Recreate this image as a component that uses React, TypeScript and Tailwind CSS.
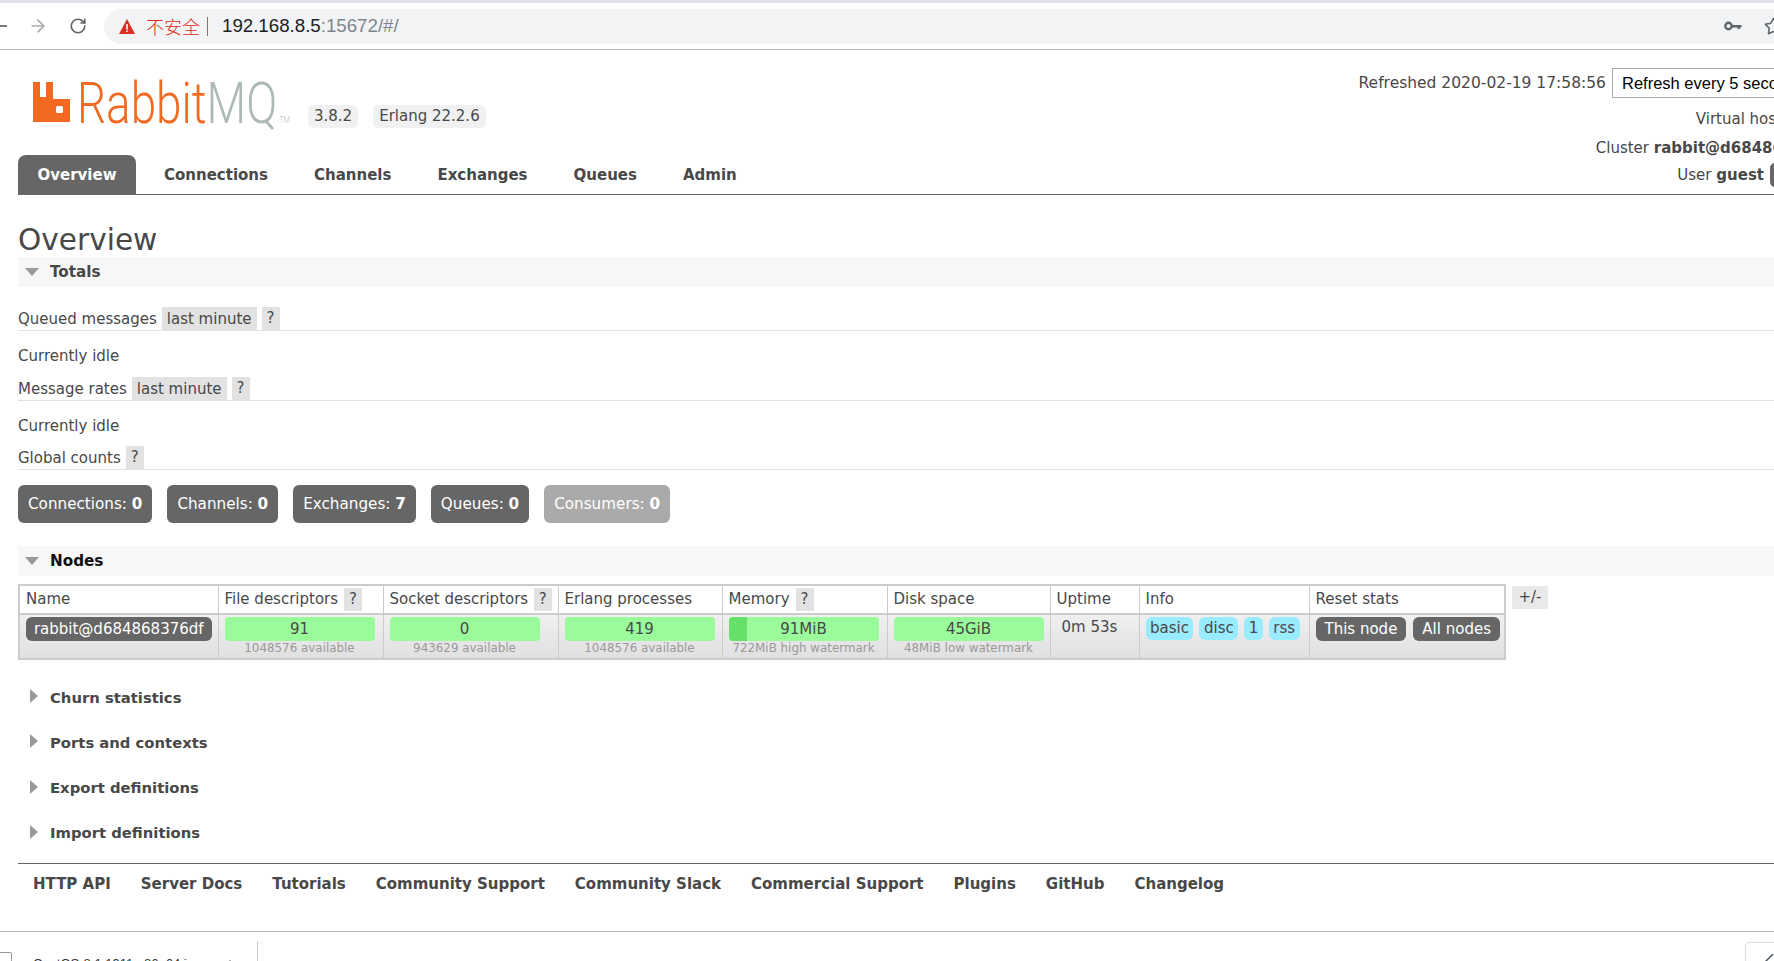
import type { ReactNode } from "react";
import { ArrowRight, RotateCw, Star, ChevronUp } from "lucide-react";

const font = { fontFamily: '"DejaVu Sans", Verdana, sans-serif' };

function Help() {
  return <span className="inline-flex items-center justify-center bg-[#e2e2e2] text-[#484848] h-[23px] w-[18px]">?</span>;
}

function Down() {
  return <span className="w-0 h-0 border-l-[7px] border-r-[7px] border-t-[8px] border-l-transparent border-r-transparent border-t-[#999]" />;
}

function Right() {
  return <span className="w-0 h-0 border-t-[7px] border-b-[7px] border-l-[8px] border-t-transparent border-b-transparent border-l-[#999] -mt-[3px]" />;
}

function Section({ title, dark }: { title: string; dark?: boolean }) {
  return (
    <div className="h-[30px] bg-[#f7f7f7] flex items-center pl-[7px] gap-[11px]">
      <Down />
      <span className={"font-bold text-[15.2px] " + (dark ? "text-[#111]" : "text-[#484848]")}>{title}</span>
    </div>
  );
}

function Closed({ title }: { title: string }) {
  return (
    <div className="h-[45.3px] flex items-center pl-[12px] gap-[12px]">
      <Right />
      <span className="font-bold text-[14.8px] text-[#484848]">{title}</span>
    </div>
  );
}

function Sub({ label, badge }: { label: string; badge?: boolean }) {
  return (
    <div className="h-[23px] flex items-end border-b border-[#e2e2e2] box-content">
      <span className="self-center text-[#484848] mr-[5px] pt-[2px]">{label}</span>
      {badge && <span className="h-[23px] bg-[#e2e2e2] px-[5px] pt-[2px] flex items-center mr-[5px] text-[#484848]">last minute</span>}
      <Help />
    </div>
  );
}

function Count({ label, n, off }: { label: string; n: number; off?: boolean }) {
  return (
    <span className={"h-[38px] rounded-[6px] px-[10px] flex items-center text-white text-[15.2px] " + (off ? "bg-[#aaa]" : "bg-[#666]")}>
      {label}:&nbsp;<b>{n}</b>
    </span>
  );
}

function Bar({ value, sub, mark }: { value: string; sub: string; mark?: boolean }) {
  return (
    <td className="border-r border-[#ccc] align-top pl-[6px] pt-[2px] text-center">
      <div className="w-[150px]">
        <div className="relative h-[24px] rounded-[4px] bg-[#99fb99] flex items-center justify-center overflow-hidden text-[#484848]">
          {mark && <span className="absolute left-0 top-0 bottom-0 w-[18px] bg-[#66e066]" />}
          <span className="relative">{value}</span>
        </div>
        <div className="text-[11.9px] leading-[14px] text-[#999] whitespace-nowrap">{sub}</div>
      </div>
    </td>
  );
}

function Th({ w, children }: { w: number; children: ReactNode }) {
  return (
    <th style={{ width: w }} className="border-r border-b-2 border-[#ccc] text-left font-normal text-[#484848] px-[6px] h-[29px]">
      <span className="flex items-center gap-[6px] whitespace-nowrap">{children}</span>
    </th>
  );
}

function Chip({ children }: { children: ReactNode }) {
  return <span className="h-[23px] px-[4.5px] rounded-[6px] bg-[#99ebff] text-[#484848] flex items-center">{children}</span>;
}

function Pill({ children }: { children: ReactNode }) {
  return <span className="h-[24px] px-[9px] rounded-[6px] bg-[#666] text-white flex items-center whitespace-nowrap">{children}</span>;
}

export default function App() {
  const tabs = ["Connections", "Channels", "Exchanges", "Queues", "Admin"];
  const links = ["HTTP API", "Server Docs", "Tutorials", "Community Support", "Community Slack", "Commercial Support", "Plugins", "GitHub", "Changelog"];
  return (
    <div style={font} className="w-[1774px] h-[961px] overflow-hidden bg-white text-[15px] flex flex-col">
      <div className="h-[3px] bg-[#dee1e6] shrink-0" />
      <div className="h-[46px] shrink-0 border-b border-[#b4b4b4] box-content flex items-center bg-white">
        <span className="w-[7px] h-[2px] bg-[#777] mr-[21px]" />
        <ArrowRight size={20} className="text-[#aaa] mr-[21px]" strokeWidth={2} />
        <RotateCw size={18} className="text-[#5f6368] mr-[17px]" strokeWidth={2.2} />
        <div className="flex-1 h-[35px] rounded-l-[18px] bg-[#f1f3f4] flex items-center pl-[15px]">
          <svg width="16" height="15" viewBox="0 0 16 15"><path d="M8 0 L16 15 H0Z" fill="#d93025" /><rect x="7.2" y="5" width="1.6" height="5.5" fill="#fff" /><rect x="7.2" y="11.5" width="1.6" height="1.6" fill="#fff" /></svg>
          <span style={{ fontFamily: '"Noto Sans CJK SC", sans-serif' }} className="text-[#e02a20] text-[18px] ml-[11px] font-light">不安全</span>
          <span className="w-px h-[19px] bg-[#777] ml-[7px] mr-[14px]" />
          <span style={{ fontFamily: '"Liberation Sans", sans-serif' }} className="text-[18.7px] text-[#202124]">192.168.8.5<span className="text-[#80868b]">:15672/#/</span></span>
          <div className="ml-auto flex items-center">
            <svg width="18" height="10" viewBox="0 0 18 10" className="mr-[22px]"><circle cx="4.5" cy="5" r="3.2" fill="none" stroke="#5f6368" strokeWidth="2.4" /><path d="M8 4 H17.5 V6.5 H16 V8 H13.5 V6.5 H8Z" fill="#5f6368" /></svg>
            <Star size={19} className="text-[#5f6368] -mr-[9px]" />
          </div>
        </div>
      </div>

      <div className="h-[145px] shrink-0 flex justify-between border-b border-[#666] ml-[18px] -mr-[70px]">
        <div className="flex flex-col justify-between">
          <div className="flex items-end pt-[32px] pl-[15px]">
            <svg width="37" height="40" viewBox="0 0 37 40" className="shrink-0 mb-[1px]">
              <path d="M0 0 H7 V15 H13 V0 H20 V17 H37 V40 H0Z" fill="#f26a21" />
              <rect x="23" y="24" width="7" height="7" rx="1.5" fill="#fff" />
            </svg>
            <div style={{ fontFamily: "Roboto, sans-serif" }} className="w-[210px] h-[41px] leading-[41px] text-[58px] font-light whitespace-nowrap origin-left scale-x-[0.79] ml-[7px] -mb-[1px]">
              <span className="text-[#f26a21]">Rabbit</span><span className="text-[#adbab4]">MQ</span><span className="text-[9px] text-[#bbb] ml-[3px]">TM</span>
            </div>
            <span className="h-[23px] px-[6px] ml-[21px] rounded-[5px] bg-[#f1f1f1] text-[#484848] flex items-center -mb-[5px]">3.8.2</span>
            <span className="h-[23px] px-[6px] ml-[15px] rounded-[5px] bg-[#f1f1f1] text-[#484848] flex items-center -mb-[5px] whitespace-nowrap">Erlang 22.2.6</span>
          </div>
          <div className="flex h-[39px] items-stretch font-bold text-[#484848]">
            <span className="w-[118px] rounded-t-[8px] bg-[#666] text-[#fff] flex items-center justify-center pt-[2px]">Overview</span>
            {tabs.map((t, i) => (
              <span key={t} className={"flex items-center pt-[2px] " + (i === 0 ? "ml-[28px]" : "ml-[46px]")}>{t}</span>
            ))}
          </div>
        </div>
        <div className="text-[#484848] flex flex-col items-end pt-[16px] w-[500px]">
          <div className="flex items-center h-[34px]">
            <span className="mr-[6px] pt-[2px] text-[15.5px]">Refreshed 2020-02-19 17:58:56</span>
            <span style={{ fontFamily: '"Liberation Sans", sans-serif' }} className="h-[30px] w-[232px] border border-[#aaa] bg-white text-black text-[16.5px] flex items-center px-[9px] whitespace-nowrap overflow-hidden">Refresh every 5 seconds</span>
          </div>
          <div className="h-[24px] mt-[7px] mr-[2px] flex items-center">Virtual host<span className="w-[60px]" /></div>
          <div className="h-[24px] mt-[5px] mr-[2px] flex items-center">Cluster&nbsp;<b>rabbit@d684868376df</b></div>
          <div className="h-[24px] mt-[3px] mr-[2px] flex items-center">User&nbsp;<b>guest</b><span className="h-[24px] w-[72px] rounded-[5px] bg-[#666] text-white ml-[6px] flex items-center justify-center">Log out</span></div>
        </div>
      </div>

      <main className="flex-1 pl-[18px] -mr-[70px]">
        <h1 className="text-[29.6px] leading-[32px] mt-[29px] text-[#484848] h-[32px]">Overview</h1>
        <div className="mt-[1px]"><Section title="Totals" /></div>
        <div className="mt-[20px]"><Sub label="Queued messages" badge /></div>
        <div className="mt-[13px] h-[24px] flex items-center text-[#484848]">Currently idle</div>
        <div className="mt-[9px]"><Sub label="Message rates" badge /></div>
        <div className="mt-[13px] h-[24px] flex items-center text-[#484848]">Currently idle</div>
        <div className="mt-[8px]"><Sub label="Global counts" /></div>
        <div className="mt-[15px] flex gap-[15px]">
          <Count label="Connections" n={0} />
          <Count label="Channels" n={0} />
          <Count label="Exchanges" n={7} />
          <Count label="Queues" n={0} />
          <Count label="Consumers" n={0} off />
        </div>
        <div className="mt-[23px]"><Section title="Nodes" dark /></div>
        <div className="mt-[8px] flex items-start gap-[6px]">
          <table className="border-collapse border-2 border-[#ccc] table-fixed w-[1488px]">
            <thead>
              <tr>
                <Th w={199}>Name</Th>
                <Th w={165}>File descriptors <Help /></Th>
                <Th w={175}>Socket descriptors <Help /></Th>
                <Th w={164}>Erlang processes</Th>
                <Th w={165}>Memory <Help /></Th>
                <Th w={163}>Disk space</Th>
                <Th w={89}>Uptime</Th>
                <Th w={170}>Info</Th>
                <Th w={196}>Reset stats</Th>
              </tr>
            </thead>
            <tbody>
              <tr className="h-[45px] bg-gradient-to-b from-[#f0f0f0] to-[#e0e0e0]">
                <td className="border-r border-[#ccc] align-top px-[6px] pt-[2px]">
                  <span className="h-[24px] rounded-[6px] bg-[#666] text-white flex items-center justify-center whitespace-nowrap">rabbit@d684868376df</span>
                </td>
                <Bar value="91" sub="1048576 available" />
                <Bar value="0" sub="943629 available" />
                <Bar value="419" sub="1048576 available" />
                <Bar value="91MiB" sub="722MiB high watermark" mark />
                <Bar value="45GiB" sub="48MiB low watermark" />
                <td className="border-r border-[#ccc] align-top pl-[11px] pt-[1px] text-[#484848] whitespace-nowrap">0m 53s</td>
                <td className="border-r border-[#ccc] align-top px-[6px] pt-[2px]">
                  <div className="flex gap-[6px]"><Chip>basic</Chip><Chip>disc</Chip><Chip>1</Chip><Chip>rss</Chip></div>
                </td>
                <td className="align-top px-[6px] pt-[2px]">
                  <div className="flex gap-[7px]"><Pill>This node</Pill><Pill>All nodes</Pill></div>
                </td>
              </tr>
            </tbody>
          </table>
          <span className="h-[23px] w-[36px] mt-[2px] bg-[#e9e9e9] text-[#484848] flex items-center justify-center">+/-</span>
        </div>
        <div className="mt-[15px]">
          <Closed title="Churn statistics" />
          <Closed title="Ports and contexts" />
          <Closed title="Export definitions" />
          <Closed title="Import definitions" />
        </div>
        <div className="mt-[7px] border-t border-[#666] flex h-[42px] items-center pl-[15px] gap-[30px] font-bold text-[#484848]">
          {links.map((l) => <span key={l}>{l}</span>)}
        </div>
      </main>

      <div className="h-[30px] shrink-0 border-t border-[#b4b4b4] bg-white relative overflow-hidden">
        <span style={{ fontFamily: '"Liberation Sans", sans-serif' }} className="absolute left-[33px] top-[22px] text-[13px] text-[#333] whitespace-nowrap">CentOS-8.1.1911-x86_64.iso</span>
        <ChevronUp size={12} className="absolute left-[224px] top-[24px] text-[#555]" />
        <span className="absolute left-[257px] top-[9px] bottom-0 w-px bg-[#ccc]" />
        <span className="absolute left-[-4px] top-[20px] w-[16px] h-[16px] border border-[#999] rounded-[2px]" />
        <span className="absolute left-[1745px] top-[10px] w-[40px] h-[30px] border border-[#ddd] rounded-[4px]" />
        <svg width="9" height="8" viewBox="0 0 9 8" className="absolute left-[1765px] top-[22px]"><path d="M0 8 L8 0" stroke="#456" strokeWidth="1.5" /></svg>
      </div>
    </div>
  );
}
